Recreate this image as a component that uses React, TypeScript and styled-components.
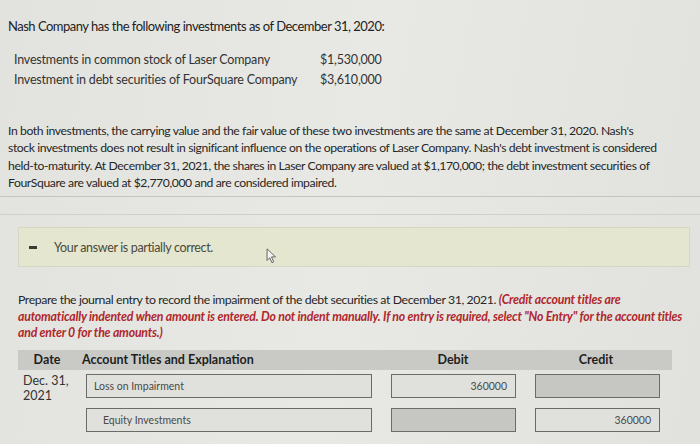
import React from 'react';
import styled, { createGlobalStyle } from 'styled-components';

const GlobalStyle = createGlobalStyle`
    html, body {
        margin: 0;
        padding: 0;
        background: #e4e5e1;
    }
    body {
        font-family: Lato, "Open Sans", sans-serif;
        color: #2a2a2a;
    }
`;

const investments = [
    { label: 'Investments in common stock of Laser Company', amount: '$1,530,000' },
    { label: 'Investment in debt securities of FourSquare Company', amount: '$3,610,000' },
];

const paragraphLines = [
    "In both investments, the carrying value and the fair value of these two investments are the same at December 31, 2020. Nash's",
    "stock investments does not result in significant influence on the operations of Laser Company. Nash's debt investment is considered",
    'held-to-maturity. At December 31, 2021, the shares in Laser Company are valued at $1,170,000; the debt investment securities of',
    'FourSquare are valued at $2,770,000 and are considered impaired.',
];

const entries = [
    { title: 'Loss on Impairment', debit: '360000', credit: '', indent: false },
    { title: 'Equity Investments', debit: '', credit: '360000', indent: true },
];

const App: React.FC = () => {
    return (
        <Page>
            <GlobalStyle />
            <Intro>Nash Company has the following investments as of December 31, 2020:</Intro>
            <InvestTable>
                {investments.map((item) => (
                    <React.Fragment key={item.label}>
                        <InvestLabel>{item.label}</InvestLabel>
                        <InvestAmount>{item.amount}</InvestAmount>
                    </React.Fragment>
                ))}
            </InvestTable>
            <Paragraph>
                {paragraphLines.map((line) => (
                    <Line key={line}>{line}</Line>
                ))}
            </Paragraph>
            <Divider />
            <Section>
                <Feedback>
                    <Dash />
                    <FeedbackText>Your answer is partially correct.</FeedbackText>
                    <Cursor viewBox="0 0 12 18" width="11" height="16">
                        <path d="M1 1 L1 14 L4 11 L6.5 16.5 L8.5 15.5 L6 10 L10.5 10 Z" fill="#f4f4f4" stroke="#555" strokeWidth="1" />
                    </Cursor>
                </Feedback>
                <Prompt>
                    <Line>
                        Prepare the journal entry to record the impairment of the debt securities at December 31, 2021.{' '}
                        <Note>(Credit account titles are</Note>
                    </Line>
                    <Line>
                        <Note>
                            automatically indented when amount is entered. Do not indent manually. If no entry is
                            required, select "No Entry" for the account titles
                        </Note>
                    </Line>
                    <Line>
                        <Note>and enter 0 for the amounts.)</Note>
                    </Line>
                </Prompt>
                <Journal>
                    <HeadRow>
                        <HeadCell>Date</HeadCell>
                        <HeadCell $left>Account Titles and Explanation</HeadCell>
                        <HeadCell>Debit</HeadCell>
                        <HeadCell>Credit</HeadCell>
                    </HeadRow>
                    {entries.map((entry, i) => (
                        <EntryRow key={entry.title} $first={i === 0}>
                            <DateCell>{i === 0 ? <>Dec. 31,<br />2021</> : null}</DateCell>
                            <Field $indent={entry.indent}>{entry.title}</Field>
                            <AmountField $filled={entry.debit !== ''}>{entry.debit}</AmountField>
                            <AmountField $filled={entry.credit !== ''}>{entry.credit}</AmountField>
                        </EntryRow>
                    ))}
                </Journal>
            </Section>
        </Page>
    );
};

const Page = styled.div`
    width: 700px;
    height: 444px;
    overflow: hidden;
    padding: 17px 0 0 8px;
    box-sizing: border-box;
    background: linear-gradient(100deg, #e2e3df 0%, #e8e9e5 50%, #e1e2de 100%);
`;

const Intro = styled.div`
    font-size: 13px;
    letter-spacing: -0.5px;
    color: #222;
    line-height: 18px;
`;

const InvestTable = styled.div`
    display: grid;
    grid-template-columns: 306px auto;
    row-gap: 2px;
    margin: 16px 0 0 6px;
    font-size: 12.5px;
    line-height: 18px;
    color: #333;
    letter-spacing: -0.2px;
`;

const InvestLabel = styled.div``;

const InvestAmount = styled.div``;

const Paragraph = styled.div`
    margin-top: 33px;
    font-size: 12.2px;
    line-height: 17.3px;
    letter-spacing: -0.4px;
    color: #262626;
`;

const Line = styled.div`
    white-space: nowrap;
`;

const Divider = styled.div`
    margin: 5px 0 0 -8px;
    height: 17px;
    border-top: 1px solid #c4c5c1;
    border-bottom: 1px solid #cfd0cc;
`;

const Section = styled.div`
    padding: 12px 0 0 10px;
`;

const Feedback = styled.div`
    position: relative;
    display: flex;
    align-items: center;
    width: 672px;
    height: 40px;
    box-sizing: border-box;
    padding-left: 10px;
    background: #e5e6cf;
    border: 1px solid #d6d7c2;
`;

const Dash = styled.span`
    width: 8px;
    height: 3px;
    background: #3a3a30;
`;

const FeedbackText = styled.span`
    margin-left: 17px;
    font-size: 12.5px;
    letter-spacing: -0.35px;
    color: #4a4a3a;
`;

const Cursor = styled.svg`
    position: absolute;
    left: 247px;
    top: 20px;
`;

const Prompt = styled.div`
    margin-top: 25px;
    font-size: 12.3px;
    line-height: 16.5px;
    letter-spacing: -0.4px;
    color: #262626;
`;

const Note = styled.i`
    color: #b0262c;
    font-weight: 700;
    font-size: 12.3px;
    letter-spacing: -0.2px;
`;

const Journal = styled.div`
    margin-top: 8px;
    width: 654px;
`;

const HeadRow = styled.div`
    display: grid;
    grid-template-columns: 58px 310px 134px 152px;
    height: 20px;
    align-items: center;
    background: #c9cac6;
`;

const HeadCell = styled.div<{ $left?: boolean }>`
    font-size: 12.5px;
    font-weight: 700;
    color: #1e1e1e;
    text-align: ${(p) => (p.$left ? 'left' : 'center')};
    padding-left: ${(p) => (p.$left ? '6px' : '0')};
`;

const EntryRow = styled.div<{ $first: boolean }>`
    display: grid;
    grid-template-columns: 49px 286px 125px 125px;
    column-gap: 19px;
    margin-top: ${(p) => (p.$first ? '4px' : '10px')};
`;

const DateCell = styled.div`
    height: 24px;
    font-size: 12.5px;
    line-height: 15px;
    color: #333;
    padding-left: 5px;
    margin-top: -1px;
    white-space: nowrap;
`;

const Field = styled.div<{ $indent: boolean }>`
    height: 24px;
    box-sizing: border-box;
    border: 1.5px solid #6b6c68;
    background: #e0e1dd;
    display: flex;
    align-items: center;
    padding-left: ${(p) => (p.$indent ? '16px' : '7px')};
    font-size: 10.5px;
    color: #4a4a48;
`;

const AmountField = styled.div<{ $filled: boolean }>`
    height: 24px;
    box-sizing: border-box;
    border: 1.5px solid #6b6c68;
    background: ${(p) => (p.$filled ? '#e0e1dd' : '#c6c7c2')};
    display: flex;
    align-items: center;
    justify-content: flex-end;
    padding-right: 8px;
    font-size: 10.5px;
    color: #4a4a48;
`;

export default App;
